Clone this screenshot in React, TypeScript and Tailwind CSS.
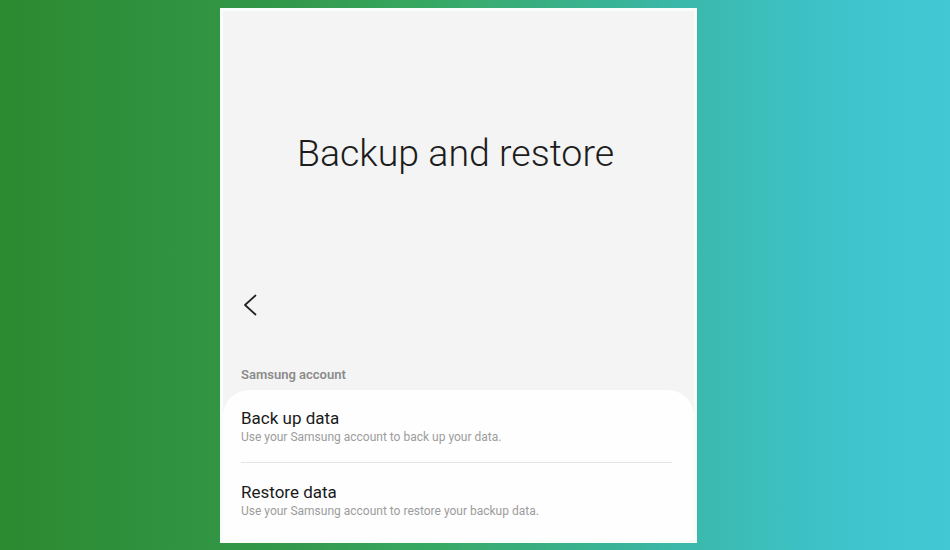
type Item = { title: string; desc: string };

const items: Item[] = [
  { title: 'Back up data', desc: 'Use your Samsung account to back up your data.' },
  { title: 'Restore data', desc: 'Use your Samsung account to restore your backup data.' },
];

function BackArrow() {
  return (
    <svg width="16" height="22" viewBox="0 0 16 22" fill="none" stroke="#222" strokeWidth="1.7" strokeLinecap="round" strokeLinejoin="round">
      <path d="M13.5 1.5 3 11l10.5 9.5" />
    </svg>
  );
}

export default function App() {
  return (
    <div
      className="flex h-[550px] w-[950px] bg-[linear-gradient(90deg,#2c8a30_0%,#32984a_30%,#37a862_45%,#3ab7a6_70%,#3ec3cb_88%,#41c8d4_100%)] pl-[220px] pt-[8px]"
      style={{ fontFamily: 'Roboto, "Noto Sans", sans-serif' }}
    >
      <div className="flex h-[535px] w-[477px] flex-col border-[3px] border-[#f8fdf9] bg-[#f4f4f4]">
        <h1 className="pr-[6px] pt-[120px] text-center text-[37.5px] font-light leading-[44px] text-[#1c1c1c]">
          Backup and restore
        </h1>

        <div className="mt-[119px] pl-[19px]">
          <BackArrow />
        </div>

        <div className="mt-[51px] pl-[18px] text-[13px] font-semibold leading-[16px] text-[#8b8b8b]">
          Samsung account
        </div>

        <div className="mt-[7px] flex-1 rounded-t-[26px] bg-[#fefefe] px-[18px] pt-[17px]">
          {items.map((it, i) => (
            <div key={it.title}>
              {i > 0 && <div className="mr-[4px] h-px bg-[#e4e4e4]" />}
              <div className={i === 0 ? 'pb-[16px]' : 'pt-[18px]'}>
                <div className="text-[17px] leading-[22px] text-[#1a1a1a]">{it.title}</div>
                <div className="text-[12px] leading-[17px] text-[#9c9c9c]">{it.desc}</div>
              </div>
            </div>
          ))}
        </div>
      </div>
    </div>
  );
}
